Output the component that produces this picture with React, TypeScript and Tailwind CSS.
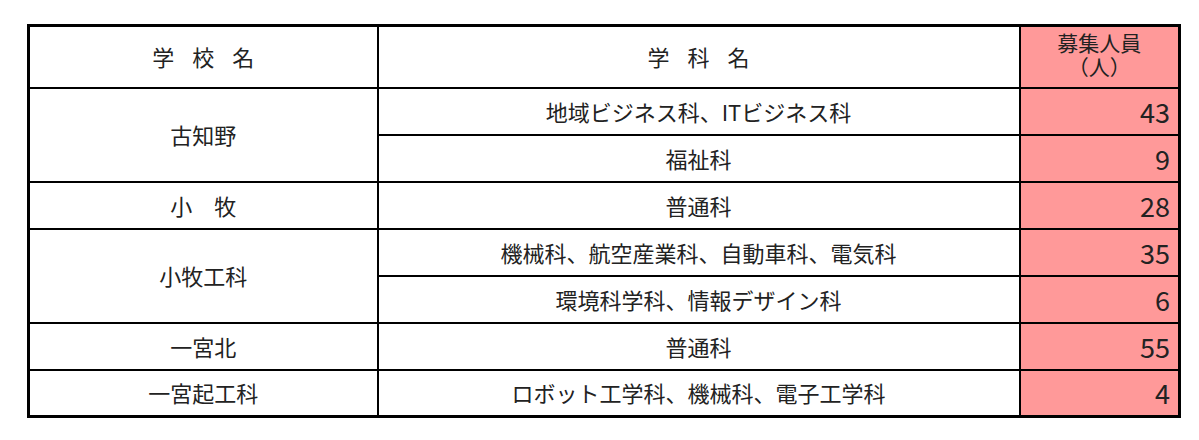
const rows: { school?: string; span?: number; dept: string; count: number }[] = [
  { school: '古知野', span: 2, dept: '地域ビジネス科、ITビジネス科', count: 43 },
  { dept: '福祉科', count: 9 },
  { school: '小　牧', span: 1, dept: '普通科', count: 28 },
  { school: '小牧工科', span: 2, dept: '機械科、航空産業科、自動車科、電気科', count: 35 },
  { dept: '環境科学科、情報デザイン科', count: 6 },
  { school: '一宮北', span: 1, dept: '普通科', count: 55 },
  { school: '一宮起工科', span: 1, dept: 'ロボット工学科、機械科、電子工学科', count: 4 },
];

export default function App() {
  return (
    <div
      className="w-[1199px] h-[440px] bg-white pt-[24px] pl-[27px] text-[#222]"
      style={{ fontFamily: '"Noto Sans CJK JP", "Noto Sans", sans-serif' }}
    >
      <table className="border-collapse border-[3px] border-black table-fixed w-[1151px]">
        <colgroup>
          <col className="w-[349px]" />
          <col className="w-[642px]" />
          <col className="w-[160px]" />
        </colgroup>
        <thead>
          <tr className="h-[62px]">
            <th className="border-2 border-black font-normal text-[22px] tracking-[18px] pl-[18px]">学校名</th>
            <th className="border-2 border-black font-normal text-[22px] tracking-[18px] pl-[18px]">学科名</th>
            <th className="border-2 border-black bg-[#ff9999] font-normal text-[21px] leading-[24px] align-top pt-[3px]">
              <div>募集人員</div>
              <div>（人）</div>
            </th>
          </tr>
        </thead>
        <tbody>
          {rows.map((r, i) => (
            <tr key={i} className="h-[47px]">
              {r.school && (
                <td rowSpan={r.span} className="border-2 border-black text-center text-[22px]">
                  {r.school}
                </td>
              )}
              <td className="border-2 border-black text-center text-[22px]">{r.dept}</td>
              <td className="border-2 border-black bg-[#ff9999] text-right pr-[8px] text-[27px] leading-none">
                {r.count}
              </td>
            </tr>
          ))}
        </tbody>
      </table>
    </div>
  );
}
